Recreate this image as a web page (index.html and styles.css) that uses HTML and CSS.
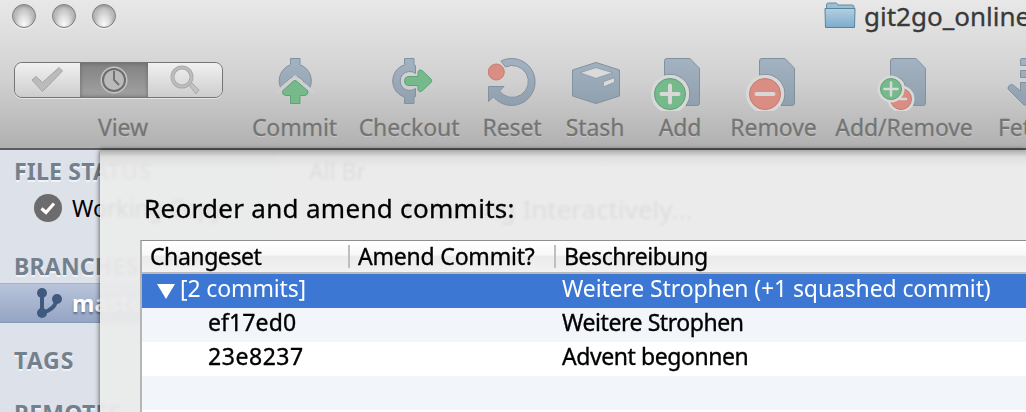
FILE: index.html
```
<!DOCTYPE html>
<html lang="de">
  <head>
    <meta charset="UTF-8" />
    <meta name="viewport" content="width=device-width, initial-scale=1.0" />
    <title>git2go_online</title>
    <link rel="stylesheet" href="styles.css">
  </head>
  <body>
    <div class="window">
      <div class="header">
        <div class="titlebar">
          <div class="lights">
            <span class="light"></span>
            <span class="light"></span>
            <span class="light"></span>
          </div>
          <div class="title">
            <svg class="folder" width="32" height="27" viewBox="0 0 32 27">
              <defs>
                <linearGradient id="folderFill" x1="0" y1="0" x2="0" y2="1">
                  <stop offset="0" stop-color="#b3cfe2" />
                  <stop offset="1" stop-color="#7dabcb" />
                </linearGradient>
              </defs>
              <path d="M2.500 6V3Q2.500 1 4.500 1H12Q13 1 14 3H28.500Q30 3 30 5V8H2.500Z" fill="#9dbdd1" stroke="#668ba3" />
              <path d="M1 6.500H31L30.500 25.500H1.500Z" fill="url(#folderFill)" stroke="#55849f" />
            </svg>
            <span>git2go_online</span>
          </div>
        </div>

        <div class="toolbar">
          <div class="tool view">
            <div class="segments">
              <div class="segment">
                <svg width="34" height="28" viewBox="0 0 34 28">
                  <path d="M2 14L6 10.500L12.500 16.500L29 1.500L32.500 5L12.500 25.500Z" fill="#bbb" stroke="#a5a5a5" />
                </svg>
              </div>
              <div class="segment active">
                <svg width="28" height="28" viewBox="0 0 28 28">
                  <circle cx="14" cy="14" r="13.500" fill="#c4c4c4" />
                  <circle cx="14" cy="14" r="11" fill="#bababa" stroke="#6d6d6d" stroke-width="2" />
                  <path d="M14 5V14L19 19" fill="none" stroke="#6d6d6d" stroke-width="1.800" />
                </svg>
              </div>
              <div class="segment">
                <svg width="30" height="30" viewBox="0 0 30 30">
                  <path d="M19 20L21.500 17.500L29 25L26 29Z" fill="#c2c2c2" stroke="#aaa" />
                  <circle cx="12" cy="12" r="9.500" fill="none" stroke="#aaa" stroke-width="4" />
                  <circle cx="12" cy="12" r="9.500" fill="none" stroke="#bdbdbd" stroke-width="2.200" />
                </svg>
              </div>
            </div>
            <span class="label">View</span>
          </div>

          <div class="tool">
            <svg class="icon" viewBox="0 0 60 56">
              <defs>
                <linearGradient id="steel" x1="0" y1="0" x2="0" y2="56" gradientUnits="userSpaceOnUse">
                  <stop offset="0" stop-color="#a5b4c3" />
                  <stop offset="1" stop-color="#8d9dac" />
                </linearGradient>
              </defs>
              <path class="steel" d="M16 33.500A17 17 0 0 1 25.500 9.800V3.500H35V9.800A17 17 0 0 1 44.500 33.500L39.500 28.500A9.800 9.800 0 0 0 21 28.500Z" />
              <path class="gap" d="M11 38L30 22L49 38" />
              <path class="green" d="M30 25.500Q31 25.500 32 26.500L43 36Q43.500 40 40 40.500H35V48.500H25.500V40.500H20.500Q17 40 17.500 36L28 26.500Q29 25.500 30 25.500Z" />
            </svg>
            <span class="label">Commit</span>
          </div>

          <div class="tool">
            <svg class="icon" viewBox="0 0 60 56">
              <path class="steel" d="M25.500 3.500H35V9.800L36.500 10.500V18.500A9.500 9.500 0 1 0 36.500 33.500V41.500L35 42V48.500H25.500V42.200A17 17 0 0 1 25.500 9.800Z" />
              <path class="green" d="M29 21.500H39V17Q40 13.500 43 15.500L52 24Q53.500 26 52 27.500L43 36Q40 38 39 35V30.500H29Q25.500 30 25.500 26Q25.500 22 29 21.500Z" />
            </svg>
            <span class="label">Checkout</span>
          </div>

          <div class="tool">
            <svg class="icon" viewBox="0 0 60 56">
              <path class="steel" d="M19 6A23.500 23.500 0 1 1 11.500 42L6.500 46.500V31.500H22L17.500 36A16 16 0 1 0 23.500 12Z" />
              <circle class="red" cx="14.300" cy="17" r="8" />
            </svg>
            <span class="label">Reset</span>
          </div>

          <div class="tool">
            <svg class="icon" viewBox="0 0 60 56">
              <path class="steel" d="M31 7.500L54.500 15V41L31 48.500L7.500 41V15Z" />
              <path d="M31 12.700L15 17.700L31 23.300L47.700 17.700ZM38.500 26.700V31.700L49.500 27.300V22.700Z" fill="#dadada" stroke="#8291a0" stroke-width="0.600" />
            </svg>
            <span class="label">Stash</span>
          </div>

          <div class="tool">
            <svg class="icon" viewBox="0 0 60 56">
              <path class="steel" d="M14.500 6Q14.500 3.500 17 3.500H40L49.500 13.300V48Q49.500 50.500 47 50.500H36A19.500 19.500 0 0 0 14.500 20.200Z" />
              <circle class="halo" cx="20" cy="39" r="17.500" />
              <circle class="green" cx="20" cy="39" r="15.500" />
              <path class="sign" d="M20 30.500V47.500M11.500 39H28.500" />
            </svg>
            <span class="label">Add</span>
          </div>

          <div class="tool">
            <svg class="icon" viewBox="0 0 60 56">
              <path class="steel" d="M15.500 6Q15.500 3.500 18 3.500H41L50.500 13.300V48Q50.500 50.500 48 50.500H37A19.500 19.500 0 0 0 15.500 20.200Z" />
              <circle class="halo" cx="21" cy="39" r="17.500" />
              <circle class="red" cx="21" cy="39" r="15.500" />
              <path class="sign" d="M12.500 39H29.500" />
            </svg>
            <span class="label">Remove</span>
          </div>

          <div class="tool">
            <svg class="icon" viewBox="0 0 60 56">
              <path class="steel" d="M16.500 6Q16.500 3.500 19 3.500H42L51.500 13.300V48Q51.500 50.500 49 50.500H39.500Q42 40 32 33Q30 21 16.500 20.500Z" />
              <circle class="halo" cx="27" cy="44" r="12" />
              <circle class="red" cx="27" cy="44" r="10.500" />
              <path class="sign thin" d="M26 44H32" />
              <circle class="halo" cx="17" cy="34" r="12" />
              <circle class="green" cx="17" cy="34" r="10.500" />
              <path class="sign thin" d="M17 27.500V40.500M10.500 34H23.500" />
            </svg>
            <span class="label">Add/Remove</span>
          </div>

          <div class="tool">
            <svg class="icon" viewBox="0 0 60 56">
              <path class="steel" d="M23.500 10.500V5Q23.500 3.500 25 3.500H37V10.500ZM23.500 15.500H37V22.500H23.500ZM23.500 27.500H37V36L43 29.500Q47 29 49 33L33 50H27L11 34Q11 29.500 15.500 29.500L23.500 36Z" />
            </svg>
            <span class="label">Fetch</span>
          </div>
        </div>
      </div>

      <div class="body">
        <div class="sidebar">
          <h3 class="group">FILE STATUS</h3>
          <div class="entry">
            <svg width="28" height="28" viewBox="0 0 28 28">
              <circle cx="14" cy="14" r="14" fill="#6c6c6c" />
              <path d="M7.500 14.500L12 18.500L20 9.500" fill="none" stroke="#fff" stroke-width="3.200" />
            </svg>
            <span>Working Copy</span>
          </div>
          <h3 class="group branches">BRANCHES</h3>
          <div class="entry selected">
            <svg width="28" height="32" viewBox="0 0 28 32">
              <path d="M6 6V26Q20 22 20.500 12" fill="none" stroke="#3f5a7e" stroke-width="4" />
              <circle cx="6" cy="6" r="5" fill="#3f5a7e" />
              <circle cx="6" cy="26" r="5" fill="#3f5a7e" />
              <circle cx="21" cy="12" r="5" fill="#3f5a7e" />
            </svg>
            <span>master</span>
          </div>
          <h3 class="group tags">TAGS</h3>
          <h3 class="group remotes">REMOTES</h3>
        </div>
        <div class="history">
          <p class="filter">All Br</p>
          <p class="progress">Rebasing Interactively...</p>
        </div>

        <div class="sheet">
          <h2>Reorder and amend commits:</h2>
          <div class="table">
            <div class="row head">
              <span>Changeset</span>
              <span>Amend Commit?</span>
              <span>Beschreibung</span>
            </div>
            <div class="row current">
              <span class="parent"><i class="triangle"></i>[2 commits]</span>
              <span></span>
              <span class="message">Weitere Strophen (+1 squashed commit)<br />Squashed</span>
            </div>
            <div class="row">
              <span class="child">ef17ed0</span>
              <span></span>
              <span>Weitere Strophen</span>
            </div>
            <div class="row">
              <span class="child hash">23e8237</span>
              <span></span>
              <span>Advent begonnen</span>
            </div>
            <div class="row"></div>
            <div class="row"></div>
          </div>
        </div>
      </div>
    </div>
  </body>
</html>
```
FILE: styles.css
```
body {
  margin: 0;
  overflow: hidden;
  font-family: 'Noto Sans', 'Open Sans', sans-serif;
  font-size: 23px;
  color: #000;
}

h2,
h3,
p {
  margin: 0;
}

.window {
  display: flex;
  flex-direction: column;
  width: 1026px;
  height: 412px;
  overflow: hidden;
}

.header {
  flex: none;
  box-sizing: border-box;
  height: 150px;
  overflow: hidden;
  background: linear-gradient(#e8e8e8, #d0d0d0 55%, #b0b0b0);
  border-bottom: 2px solid #5c5c5c;
}

.titlebar {
  display: flex;
  justify-content: space-between;
  height: 54px;
}

.lights {
  display: flex;
  gap: 16px;
  padding: 4px 0 0 12px;
}

.light {
  box-sizing: border-box;
  width: 24px;
  height: 24px;
  border: 1.5px solid #7c7c7c;
  border-radius: 50%;
  background: radial-gradient(ellipse at 50% 100%, #fff 0, #e0e0e0 35%, #bcbcbc 65%, #f0f0f0 100%);
  box-shadow: inset 0 1px 3px #888, 0 1px 0 #f5f5f5;
}

.title {
  display: flex;
  flex: none;
  gap: 8px;
  width: 202px;
  padding-top: 2px;
  font-size: 26px;
  line-height: 28px;
  color: #393939;
  white-space: nowrap;
  -webkit-text-stroke: 0.3px;
}

.folder {
  flex: none;
}

/* toolbar */
.toolbar {
  display: grid;
  grid-template-columns: 230px 113px 116px 90px 76px 94px 93px 168px 78px;
  padding-left: 8px;
}

.tool {
  display: flex;
  flex-direction: column;
  align-items: center;
}

.icon {
  width: 60px;
  height: 56px;
  margin-top: 1px;
}

.label {
  margin-top: 1px;
  line-height: 30px;
  letter-spacing: -0.1px;
  color: #747474;
  text-shadow: 0 1px 0 rgba(255, 255, 255, 0.35);
  white-space: nowrap;
  -webkit-text-stroke: 0.3px;
}

.steel {
  fill: url(#steel);
  stroke: #8291a0;
}

.green {
  fill: #76b98a;
  stroke: #5ea376;
}

.red {
  fill: #da8d83;
  stroke: #c97b72;
}

.gap {
  fill: none;
  stroke: #cfcfcf;
  stroke-width: 3;
}

.halo {
  fill: none;
  stroke: #d8d8d8;
  stroke-width: 3;
}

.sign {
  fill: none;
  stroke: #d8d8d8;
  stroke-width: 4;
  stroke-linecap: round;
}

.sign.thin {
  stroke-width: 2.5;
}

.segments {
  box-sizing: border-box;
  display: grid;
  grid-template-columns: 65px 68px 1fr;
  width: 209px;
  height: 36px;
  margin: 8px 10px 14px 0;
  overflow: hidden;
  border: 1.5px solid #757575;
  border-radius: 8px;
  box-shadow: 0 1px 0 #e4e4e4;
}

.segment {
  display: flex;
  align-items: center;
  justify-content: center;
  background: linear-gradient(#f1f1f1, #cdcdcd);
}

.segment.active {
  background: linear-gradient(#828282, #a2a2a2);
  box-shadow: inset 0 0 4px #666;
}

.view .label {
  margin-top: 0;
}

/* window content */
.body {
  position: relative;
  display: flex;
  flex: 1;
  min-height: 0;
}

.sidebar {
  flex: none;
  width: 277px;
  background: #dde1ea;
}

.group {
  padding-top: 4px;
  padding-left: 14px;
  font-size: 23px;
  line-height: 34px;
  font-weight: bold;
  letter-spacing: 0.2px;
  color: #73808d;
  text-shadow: 0 2px 0 rgba(255, 255, 255, 0.6);
}

.branches {
  padding-top: 21px;
}

.tags {
  padding-top: 20px;
  letter-spacing: 1px;
}

.remotes {
  padding-top: 19px;
}

.entry {
  display: flex;
  align-items: center;
  gap: 10px;
  height: 40px;
  padding-left: 34px;
}

.selected {
  box-sizing: border-box;
  gap: 8px;
  padding-left: 36px;
  border-top: 1px solid #a4b2cd;
  border-bottom: 1px solid #8797b8;
  background: linear-gradient(#b9c4da, #94a4c4);
  font-weight: bold;
  color: #fff;
  text-shadow: 0 2px 2px rgba(50, 70, 110, 0.6);
}

.history {
  flex: 1;
  background: #eee;
}

.filter {
  padding: 4px 0 0 32px;
  line-height: 34px;
}

.progress {
  padding: 4px 0 0 126px;
  font-size: 26px;
  line-height: 34px;
}

.sheet {
  position: absolute;
  top: 0;
  right: 0;
  bottom: 0;
  left: 100px;
  overflow: hidden;
  padding-left: 40px;
  background: linear-gradient(rgba(150, 150, 150, 0.75), rgba(205, 205, 205, 0.4) 7px, rgba(235, 235, 235, 0) 18px), rgba(235, 235, 235, 0.94);
  backdrop-filter: blur(1.5px);
  box-shadow: 0 0 5px rgba(0, 0, 0, 0.7);
}

.sheet h2 {
  padding: 41px 0 15px 4px;
  font-size: 26px;
  line-height: 34px;
  font-weight: normal;
  letter-spacing: 0.3px;
  -webkit-text-stroke: 0.3px;
}

.table {
  border-top: 1px solid #8e8e8e;
  border-left: 2px solid #b5b5b5;
  background: #fff;
}

.row {
  display: grid;
  grid-template-columns: 206px 206px 1fr;
  height: 34px;
  overflow: hidden;
  line-height: 28px;
  letter-spacing: -0.43px;
  white-space: nowrap;
  -webkit-text-stroke: 0.35px;
}

.row span {
  padding-left: 8px;
}

.row:nth-child(odd) {
  background: #f2f5fa;
}

.row.head {
  box-sizing: border-box;
  height: 33px;
  padding: 4px 0;
  border-bottom: 2px solid #bbb;
  background: linear-gradient(#fff 0, #f8f8f8 45%, #ebebeb 50%, #f2f2f2);
  line-height: 22px;
}

.row.head span + span {
  border-left: 2px solid #bfbfbf;
}

.row.head span:nth-child(2) {
  letter-spacing: -0.2px;
}

.row.current {
  background: #3b77d3;
  letter-spacing: -0.13px;
  color: #fff;
  -webkit-text-stroke: 0;
}

.row .message {
  line-height: 29px;
}

.row .parent {
  display: flex;
  align-items: flex-start;
  gap: 5px;
  padding-left: 15px;
}

.row .child {
  padding-left: 66px;
  letter-spacing: 0.1px;
}

.row .hash {
  letter-spacing: 0.55px;
}

.triangle {
  margin-top: 10px;
  border: 9px solid transparent;
  border-top: 15px solid #fff;
  border-bottom: 0;
}
```
